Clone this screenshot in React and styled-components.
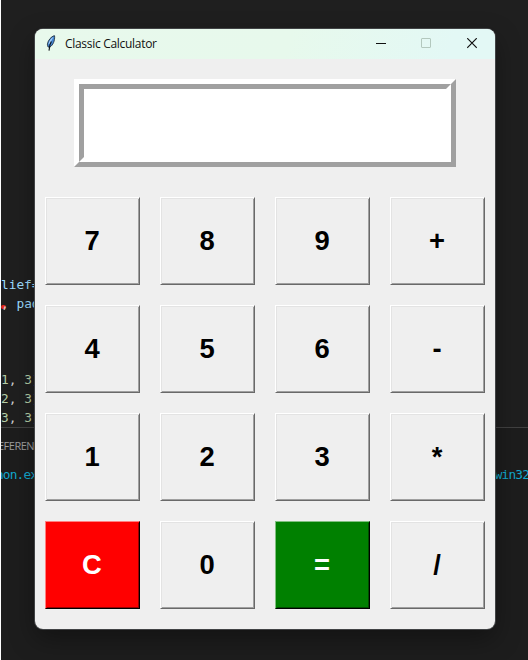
import React from "react";
import styled, { createGlobalStyle, css } from "styled-components";

const GlobalStyle = createGlobalStyle`
  body { margin: 0; background: #1f1f1f; overflow: hidden; }
  * { box-sizing: border-box; }
`;

const Desktop = styled.div`
  position: relative;
  width: 528px;
  height: 660px;
  overflow: hidden;
  border-left: 1px solid #fff;
  background: #1f1f1f;
`;

const Editor = styled.div`
  height: 427px;
  padding-top: 275px;
  font: 12.8px/19px "DejaVu Sans Mono", monospace;
  color: #9cdcfe;
  white-space: pre;
`;

const CodeLine = styled.div`
  height: 19px;
`;

const Num = styled.span`
  color: #b5cea8;
`;

const Plain = styled.span`
  color: #cccccc;
`;

const Bracket = styled.span`
  color: #5b50c8;
`;

const Breakpoint = styled.span`
  display: inline-block;
  width: 5px;
  height: 4px;
  margin-right: -5px;
  vertical-align: -1px;
  border-radius: 2px;
  background: #e5281c;
`;

const Panel = styled.div`
  height: 233px;
  border-top: 1px solid #414141;
  background: #1d1d1d;
`;

const PanelTab = styled.div`
  height: 37px;
  margin-left: -3px;
  font: 11px/36px "Open Sans", sans-serif;
  letter-spacing: -0.5px;
  color: #9d9d9d;
`;

const Terminal = styled.div`
  display: flex;
  justify-content: space-between;
  margin: 0 -1px 0 -5px;
  font: 12.8px/19px "DejaVu Sans Mono", monospace;
  letter-spacing: -0.85px;
  color: #11a8cd;
`;

const Window = styled.main`
  position: absolute;
  left: 34px;
  top: 29px;
  width: 460px;
  height: 600px;
  border-radius: 8px;
  overflow: hidden;
  background: #efefef;
`;

const Shadow = styled.div`
  position: absolute;
  left: 34px;
  top: 29px;
  width: 460px;
  height: 600px;
  border-radius: 8px;
  box-shadow: 0 0 0 1px #414345, 0 10px 26px rgba(0, 0, 0, 0.35);
`;

const TitleBar = styled.header`
  display: flex;
  align-items: center;
  height: 30px;
  padding-left: 10px;
  background: linear-gradient(105deg, #e8f9ec 0%, #e7f9ec 55%, #e3f8f5 90%);
`;

const Title = styled.h1`
  flex: 1;
  margin: 0 0 0 6px;
  font: 400 12px/30px "Open Sans", sans-serif;
  letter-spacing: -0.3px;
  color: #111;
`;

const Caption = styled.button`
  display: flex;
  align-items: center;
  justify-content: center;
  width: 46px;
  height: 30px;
  padding: 0;
  border: 0;
  background: none;
  color: ${(p) => (p.$dim ? "#b3c8be" : "#111")};
`;

const Body = styled.div`
  display: flex;
  flex-direction: column;
  align-items: center;
  padding: 20px 10px;
`;

const Display = styled.div`
  width: 382px;
  height: 88px;
  margin-bottom: 30px;
  border: 5px solid;
  border-color: #fff #a0a0a0 #a0a0a0 #fff;
`;

const DisplayWell = styled.div`
  height: 78px;
  border: 5px solid;
  border-color: #a0a0a0 #fff #fff #a0a0a0;
  background: #fff;
`;

const Keys = styled.div`
  display: grid;
  grid-template-columns: repeat(4, 95px);
  grid-auto-rows: 88px;
  gap: 20px;
`;

const tones = {
  plain: css`
    color: #000;
    background: #efefef;
    border-color: #fff #696969 #696969 #fff;
    box-shadow: inset 1px 1px #e3e3e3, inset -1px -1px #a0a0a0;
  `,
  red: css`
    color: #fff;
    background: #ff0000;
    border-color: #ff8080 #000 #000 #ff8080;
    box-shadow: inset 1px 1px #ff0000, inset -1px -1px #990000;
  `,
  green: css`
    color: #fff;
    background: #008000;
    border-color: #80c080 #000 #000 #80c080;
    box-shadow: inset 1px 1px #008000, inset -1px -1px #004d00;
  `,
};

const Key = styled.button`
  padding: 0 1px 0 0;
  border: 1px solid;
  border-radius: 0;
  font: 700 27.4px/30px "Liberation Sans", Arial, sans-serif;
  ${(p) => tones[p.$tone]}
`;

const keys = ["7", "8", "9", "+", "4", "5", "6", "-", "1", "2", "3", "*", "C", "0", "=", "/"];
const toneOf = { C: "red", "=": "green" };

const FeatherIcon = styled.svg`
  width: 14px;
  height: 16px;
  margin-bottom: 3px;
`;

function Feather() {
  return (
    <FeatherIcon viewBox="0 0 14 16">
      <path
        d="M9.3 .6C6.2 1.6 3 5.2 2.4 9.2L3 12 4.8 12.2C8 10 10 6 9.6 .8Z"
        fill="#4285d2"
        stroke="#1b2430"
        strokeWidth="0.8"
      />
      <path d="M8.6 1.8C5.8 3.4 3.8 6.4 3.3 9.6L4.8 8.6Z" fill="#a9cff8" />
      <path d="M6.4 6.6 5 9.6 4 15.6" fill="none" stroke="#0b0f16" strokeWidth="1.1" />
    </FeatherIcon>
  );
}

export default function App() {
  return (
    <>
      <GlobalStyle />
      <Desktop>
        <Editor>
          <CodeLine>lief=</CodeLine>
          <CodeLine>
            <Breakpoint />
            <Plain>,</Plain> pad
          </CodeLine>
          <CodeLine />
          <CodeLine />
          <CodeLine />
          {[1, 2, 3].map((n) => (
            <CodeLine key={n}>
              <Num>{n}</Num>
              <Plain>, </Plain>
              <Num>3</Num>
              <Bracket>)</Bracket>
            </CodeLine>
          ))}
        </Editor>
        <Panel>
          <PanelTab>EFEREN</PanelTab>
          <Terminal>
            <span>non.ex</span>
            <span>win32</span>
          </Terminal>
        </Panel>
        <Shadow />
        <Window>
          <TitleBar>
            <Feather />
            <Title>Classic Calculator</Title>
            <Caption aria-label="Minimize">
              <svg width="11" height="10" shapeRendering="crispEdges">
                <path d="M1 4.5H11" stroke="currentColor" />
              </svg>
            </Caption>
            <Caption aria-label="Maximize" $dim>
              <svg width="10" height="12">
                <rect x=".5" y=".5" width="9" height="9" rx=".5" fill="none" stroke="currentColor" />
              </svg>
            </Caption>
            <Caption aria-label="Close">
              <svg width="10" height="12">
                <path d="M.2 .2 9.8 9.8M9.8 .2 .2 9.8" stroke="currentColor" strokeWidth="1.2" />
              </svg>
            </Caption>
          </TitleBar>
          <Body>
            <Display>
              <DisplayWell />
            </Display>
            <Keys>
              {keys.map((k) => (
                <Key key={k} $tone={toneOf[k] || "plain"}>
                  {k}
                </Key>
              ))}
            </Keys>
          </Body>
        </Window>
      </Desktop>
    </>
  );
}
